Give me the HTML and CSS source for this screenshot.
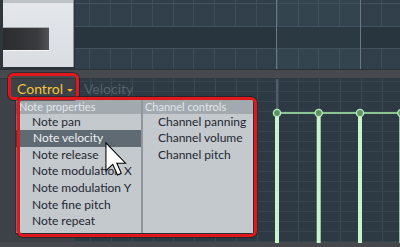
FILE: index.html
```html
<!DOCTYPE html>
<html lang="en">
<head>
  <meta charset="UTF-8">
  <title>Event Editor</title>
  <link rel="stylesheet" href="styles.css">
</head>
<body>
  <div class="app">
    <div class="roll">
      <div class="roll-edge"></div>
      <div class="keys">
        <div class="black-key"></div>
      </div>
      <div class="roll-grid"></div>
    </div>

    <div class="divider"></div>

    <div class="events">
      <div class="events-bar">
        <span class="ctl">Control <span class="caret"></span></span>
        <span class="vel">Velocity</span>
      </div>

      <!-- velocity levels -->
      <svg class="levels" width="400" height="164" viewBox="0 0 400 164">
        <line x1="277" y1="34" x2="402" y2="34" stroke="#8cc493" stroke-width="2"/>
        <rect x="275" y="34" width="4" height="130" fill="#c9f3cc"/>
        <rect x="316.7" y="34" width="4" height="130" fill="#c9f3cc"/>
        <rect x="358" y="34" width="4" height="130" fill="#c9f3cc"/>
        <rect x="399.3" y="34" width="4" height="130" fill="#c9f3cc"/>
        <circle cx="277" cy="34" r="3.6" fill="#5c9463" stroke="#b7e8ba" stroke-width="1.4"/>
        <circle cx="318.7" cy="34" r="3.6" fill="#5c9463" stroke="#b7e8ba" stroke-width="1.4"/>
        <circle cx="360" cy="34" r="3.6" fill="#5c9463" stroke="#b7e8ba" stroke-width="1.4"/>
        <circle cx="401.3" cy="34" r="3.6" fill="#5c9463" stroke="#b7e8ba" stroke-width="1.4"/>
      </svg>

      <div class="menu">
        <div class="menu-col col-note">
          <div class="menu-head">Note properties</div>
          <div class="menu-item">Note pan</div>
          <div class="menu-item active">Note velocity</div>
          <div class="menu-item">Note release</div>
          <div class="menu-item">Note modulation X</div>
          <div class="menu-item">Note modulation Y</div>
          <div class="menu-item">Note fine pitch</div>
          <div class="menu-item">Note repeat</div>
        </div>
        <div class="menu-col col-chan">
          <div class="menu-head">Channel controls</div>
          <div class="menu-item">Channel panning</div>
          <div class="menu-item">Channel volume</div>
          <div class="menu-item">Channel pitch</div>
        </div>
      </div>

      <div class="mark mark-ctl"></div>
      <div class="mark mark-menu"></div>

      <svg class="cursor" width="22" height="35" viewBox="0 0 12.5 20">
        <path d="M0.5 0.5 L0.5 16.4 L4.4 12.8 L7.1 18.9 L9.3 17.9 L6.7 12.1 L11.7 12.1 Z" fill="#fff" stroke="#000" stroke-width="0.6" stroke-linejoin="miter"/>
      </svg>
    </div>

    <div class="status"></div>
  </div>
</body>
</html>
```

FILE: styles.css
```css
body {
  margin: 0;
  background-color: #3c4247;
  font-family: Lato, "Liberation Sans", sans-serif;
}

.app {
  width: 400px;
  height: 247px;
  overflow: hidden;
  display: flex;
  flex-direction: column;
}

/* piano roll */
.roll {
  display: flex;
  height: 69px;
  background-color: #2c3338;
}

.roll-edge {
  width: 3px;
  background-color: #30373c;
}

.keys {
  width: 70px;
  height: 67px;
  background: linear-gradient(#bcc1c6 0 3px, #e3e7eb 3px, #d9dde1 100%);
  border-right: 1px solid #8f969c;
}

.black-key {
  margin-top: 27px;
  width: 46px;
  height: 22px;
  background: linear-gradient(90deg, #2b2c2f, #3a3b3f 75%, #515357);
  border-bottom: 1px solid #f4f6f8;
  border-top: 1px solid #a9aeb3;
}

.roll-grid {
  flex: 1;
  margin-left: 1px;
  background:
    linear-gradient(90deg, transparent 201px, #6a7982 201px 202px, transparent 202px 284.7px, #6a7982 284.7px 285.7px, transparent 285.7px),
    linear-gradient(transparent 3px, #42525d 3px 4px, transparent 4px 26px, #42525d 26px 27px, transparent 27px 48px, #42525d 48px 49px, transparent 49px),
    linear-gradient(90deg, rgba(0, 0, 0, 0.07) 0 202px, transparent 202px 285px, rgba(0, 0, 0, 0.07) 285px),
    linear-gradient(transparent 27px, #2b3942 27px 48px, transparent 48px),
    repeating-linear-gradient(90deg, transparent 0 14.3px, #42525d 14.3px 15.3px, transparent 15.3px 20.83px),
    #34444f;
}

.divider {
  height: 8px;
  background-color: #464a4f;
  border-top: 1px solid #2a3035;
}

/* event editor */
.events {
  position: relative;
  height: 164px;
  background:
    linear-gradient(90deg, #3c4247 0 75px, transparent 75px),
    linear-gradient(90deg, transparent 276px, #4f606a 276px 278px, transparent 278px),
    repeating-linear-gradient(transparent 0 2px, #37454f 2px 3px, transparent 3px 10px),
    repeating-linear-gradient(90deg, transparent 0 6.8px, #3b4953 6.8px 7.8px, transparent 7.8px 20.83px),
    #2d3a43;
  border-top: 1px solid #30363b;
}

.events-bar {
  display: flex;
  align-items: center;
  height: 20px;
  padding-left: 17px;
  gap: 11px;
}

.ctl {
  color: #f4c53c;
  font-size: 14px;
  display: flex;
  align-items: center;
  gap: 4px;
}

.caret {
  width: 0;
  height: 0;
  border-left: 3px solid transparent;
  border-right: 3px solid transparent;
  border-top: 3px solid #f2b431;
  margin-top: 3px;
}

.vel {
  color: #56616a;
  font-size: 14px;
}

.levels {
  position: absolute;
  left: 0;
  top: 0;
}

.menu {
  position: absolute;
  left: 15px;
  top: 20px;
  width: 237px;
  height: 133px;
  display: flex;
  background-color: #c4c9cd;
  border: 1px solid #2b3035;
  font-size: 12px;
}

.menu-col {
  display: flex;
  flex-direction: column;
}

.col-note {
  width: 125px;
  border-right: 2px solid #8f979d;
}

.col-chan {
  flex: 1;
}

.menu-head {
  height: 14px;
  line-height: 14px;
  padding-left: 3px;
  background-color: #a2aab0;
  color: #e3e7ea;
  font-size: 11px;
}

.col-chan .menu-head {
  padding-left: 2px;
}

.menu-item {
  height: 16.6px;
  line-height: 16.6px;
  padding-left: 16px;
  color: #1d2730;
}

.col-chan .menu-item {
  padding-left: 15px;
}

.menu-item.active {
  background-color: #5f6a72;
  color: #eef1f3;
  padding-left: 17px;
}

.mark {
  position: absolute;
  box-sizing: border-box;
  border: 3px solid #e3161b;
  border-radius: 6px;
  box-shadow: 0 0 0 1px rgba(20, 20, 20, 0.5);
}

.mark-ctl {
  left: 8px;
  top: -6px;
  width: 71px;
  height: 27px;
}

.mark-menu {
  left: 17px;
  top: 18px;
  width: 240px;
  height: 140px;
}

.cursor {
  position: absolute;
  left: 105px;
  top: 63px;
}

.status {
  height: 5px;
  background-color: #45494e;
}
```
